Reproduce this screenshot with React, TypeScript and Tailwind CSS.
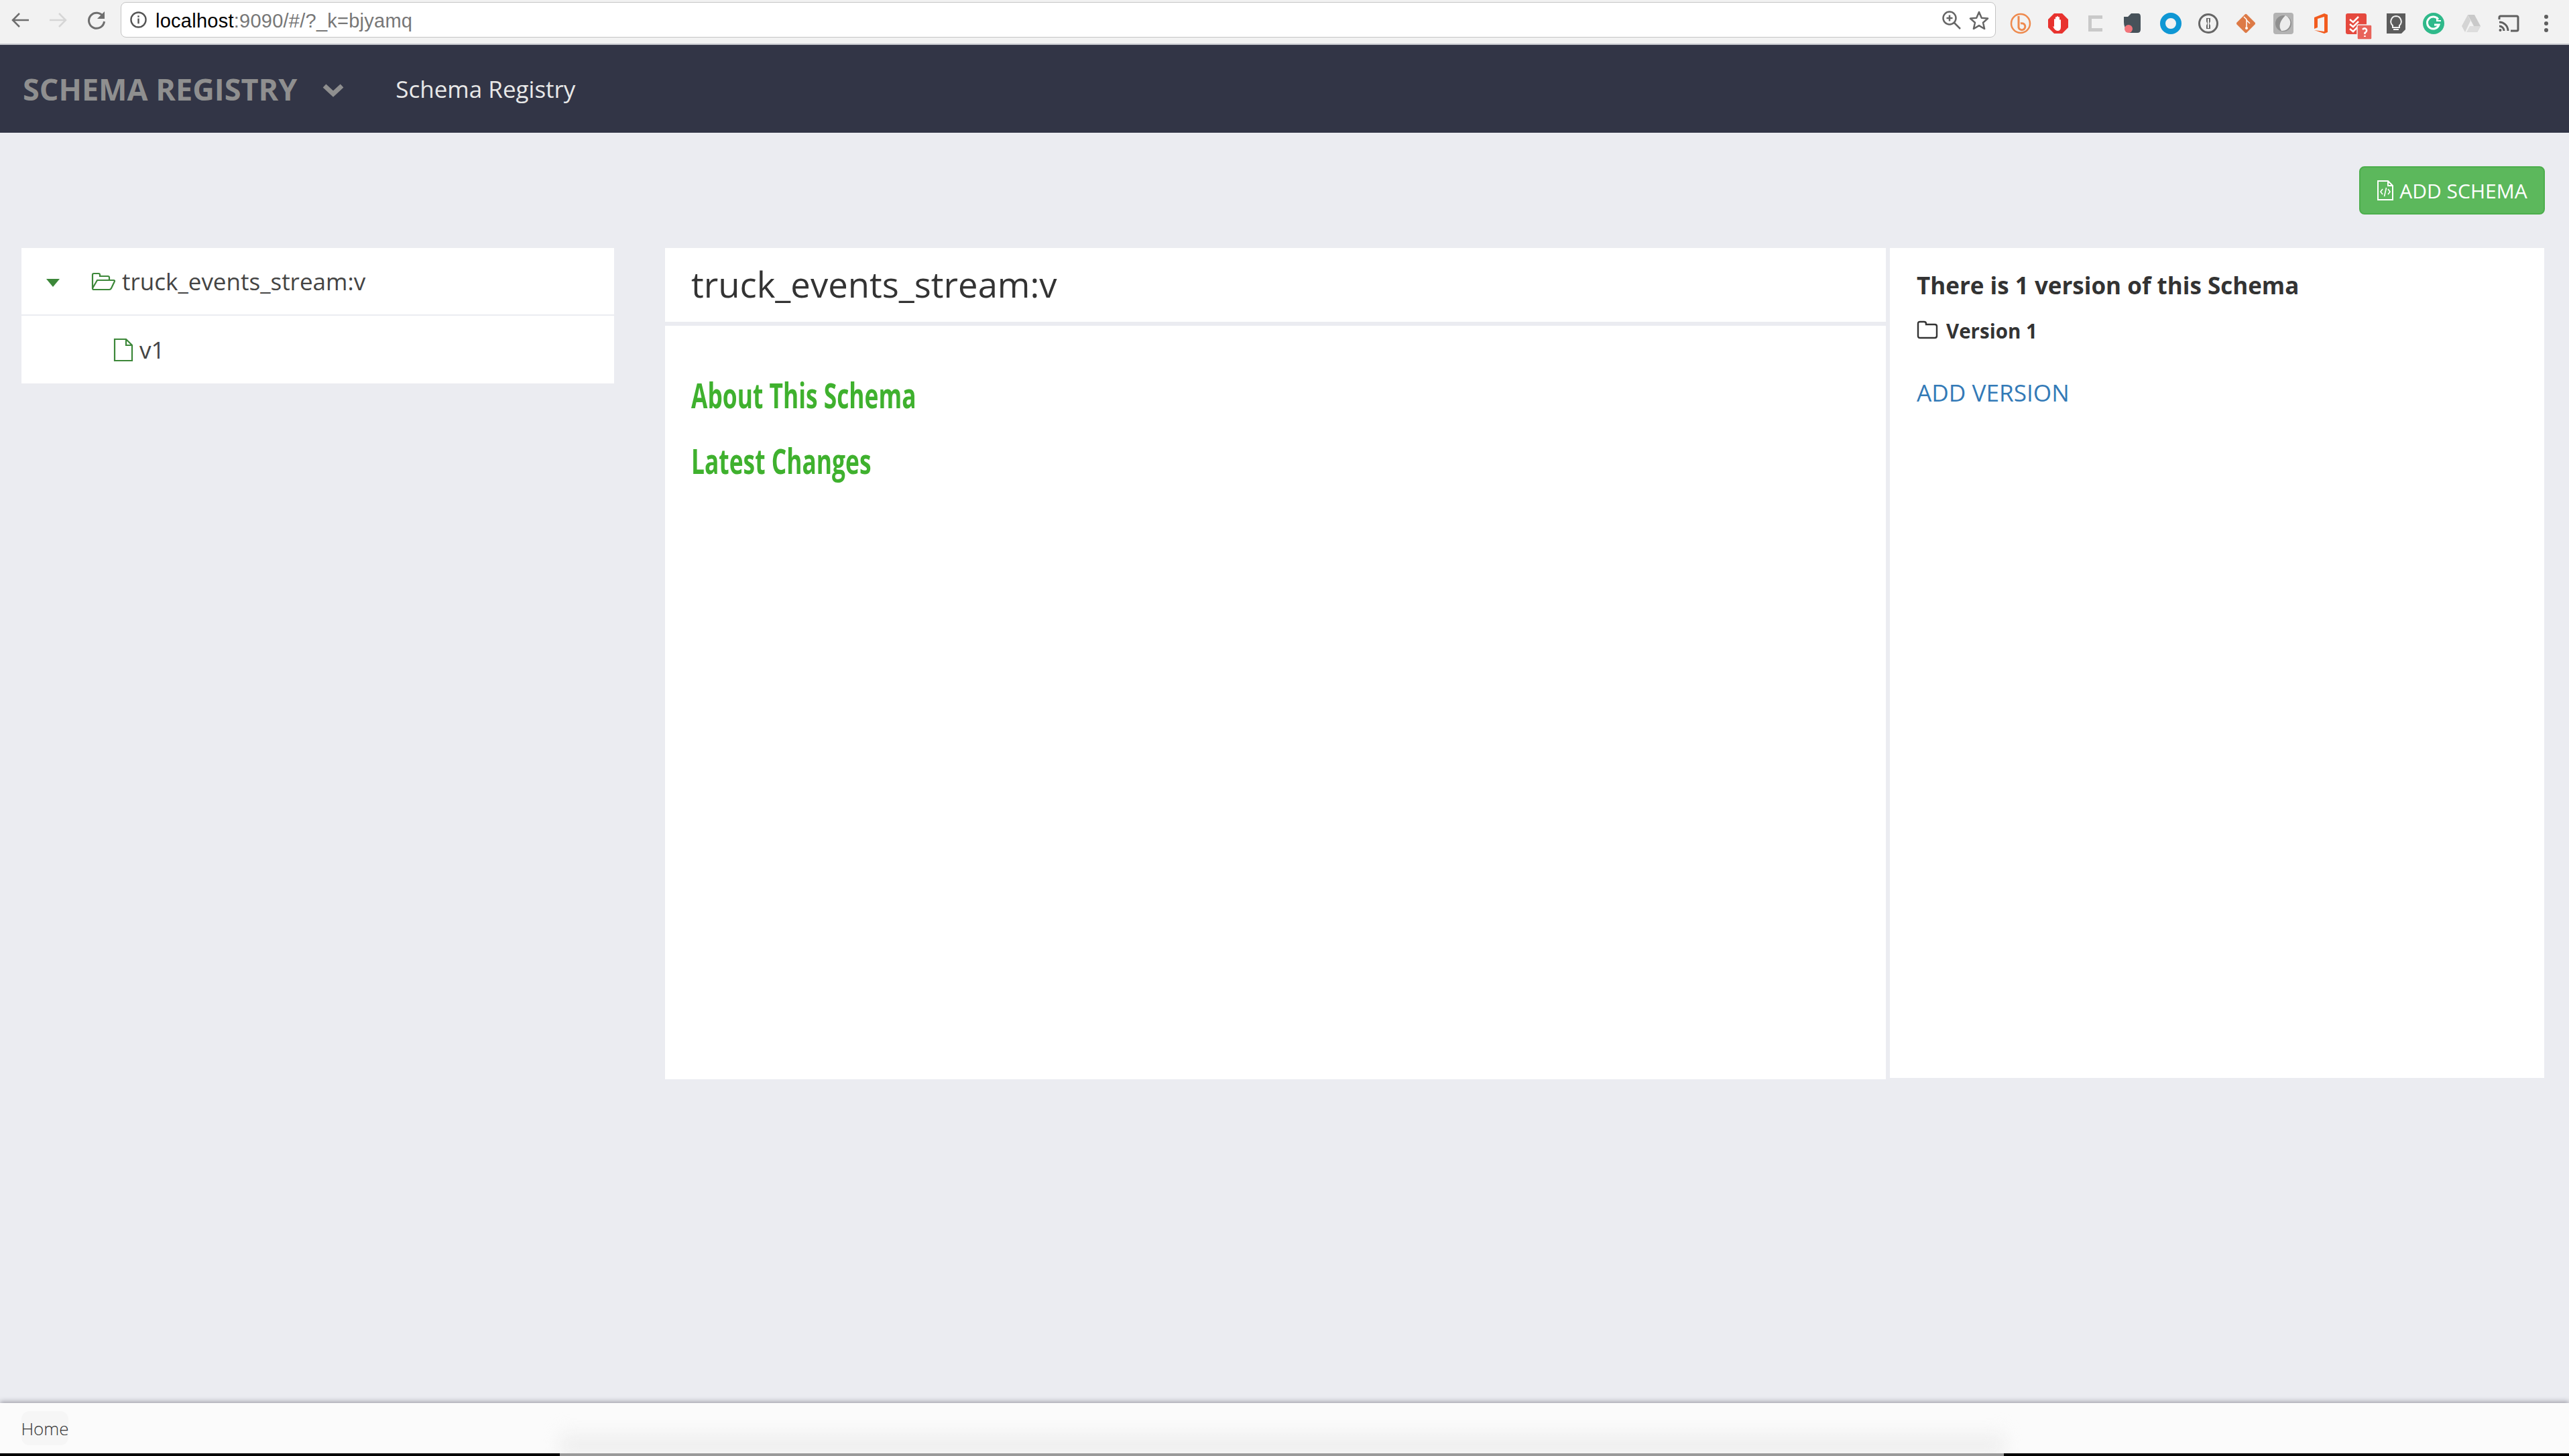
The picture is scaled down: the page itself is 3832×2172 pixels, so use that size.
import React from "react";

const Ext = ({ children }: { children: React.ReactNode }) => (
  <svg viewBox="0 0 32 32" className="w-8 h-8 shrink-0">{children}</svg>
);

function Extensions() {
  return (
    <div className="flex items-center gap-6 ml-[21px]">
      <Ext>
        <circle cx="16" cy="16" r="14" fill="none" stroke="#ee8a4e" strokeWidth="2.5" />
        <path d="M13 5v17a5 5 0 1 0 3-6" fill="none" stroke="#ee8a4e" strokeWidth="3" />
      </Ext>
      <Ext>
        <polygon points="10,1 22,1 31,10 31,22 22,31 10,31 1,22 1,10" fill="#e8332f" />
        <path d="M10 21V10q1-2 2 0v4-7q1-2 2 0v6-7q1-2 2 0v7-6q1-2 2 0v8-4q1-2 2 0v10q0 6-5 6-4 0-7-7z" fill="#fff" />
      </Ext>
      <Ext>
        <path d="M5 4h21v5H10v14h16v5H5z" fill="#c9c9c9" />
      </Ext>
      <Ext>
        <path d="M8 6l5-5h10q4 0 4 5v19q0 5-5 5H12q-3 0-4-4-6-3-6-12V6z" fill="#47525a" />
        <circle cx="9" cy="24" r="6" fill="#f2757b" />
      </Ext>
      <Ext>
        <circle cx="16" cy="16" r="12" fill="none" stroke="#0f97d4" strokeWidth="8" />
      </Ext>
      <Ext>
        <circle cx="16" cy="16" r="13.5" fill="none" stroke="#666" strokeWidth="3" />
        <path d="M13 8h6v5l-1.500 3 1.500 3v5h-6v-5l1.500-3-1.500-3z" fill="#666" />
        <rect x="15" y="9" width="2" height="14" fill="#f2f2f2" />
      </Ext>
      <Ext>
        <rect x="5.500" y="5.500" width="21" height="21" transform="rotate(45 16 16)" rx="2" fill="#dd7a46" />
        <path d="M13 6l4 4v11M17 11l5 5" fill="none" stroke="#fff" strokeWidth="1.500" />
        <circle cx="17" cy="23" r="2" fill="#fff" />
      </Ext>
      <Ext>
        <rect x="1" y="0" width="30" height="32" rx="4" fill="#b3b3b3" />
        <circle cx="16" cy="16" r="12" fill="#8f8f8f" />
        <path d="M19 4a12 12 0 0 1-6 23q-7-10 6-23z" fill="#ececec" />
      </Ext>
      <Ext>
        <path d="M6 7l15-6 5 2v26l-5 2-15-5 15 2V6l-10 3v13l-5 2z" fill="#f25c1f" />
      </Ext>
      <svg viewBox="0 0 40 40" className="w-10 h-10 shrink-0 mt-2 -mx-1">
        <rect x="1" y="1" width="31" height="31" rx="3" fill="#e5493e" />
        <path d="M7 10l5 4 8-8M7 17l5 4 8-8M7 24l5 4 8-8" fill="none" stroke="#fff" strokeWidth="2.500" />
        <rect x="18" y="18" width="22" height="22" rx="2" fill="#e8635a" stroke="#f2f2f2" strokeWidth="1.500" />
        <path d="M26 25q3-3 5.500-.5 2 3-2 5.500v2M29.500 34v2" fill="none" stroke="#fff" strokeWidth="2.500" />
      </svg>
      <Ext>
        <path d="M2 1h28v24l-6 6H2z" fill="#5c5c5c" />
        <path d="M16 5a8 8 0 0 0-5 14v3h10v-3A8 8 0 0 0 16 5zM12 25h8" fill="none" stroke="#f2f2f2" strokeWidth="2" />
      </Ext>
      <Ext>
        <circle cx="16" cy="16" r="16" fill="#2fb98a" />
        <path d="M23 10a9 9 0 1 0 1 8h-7" fill="none" stroke="#fff" strokeWidth="3" />
        <path d="M21 6v6h6" fill="none" stroke="#fff" strokeWidth="2" />
      </Ext>
      <Ext>
        <polygon points="11,3 21,3 30,20 25,29 20,20" fill="#c9c9c9" />
        <polygon points="11,3 15,12 7,29 2,20" fill="#d4d4d4" />
        <polygon points="9,29 25,29 30,20 14,20" fill="#dddddd" />
      </Ext>
      <Ext>
        <path d="M2 10V7q0-2 2-2h24q2 0 2 2v18q0 2-2 2h-9" fill="none" stroke="#5f5f5f" strokeWidth="3" />
        <path d="M2 14a13 13 0 0 1 13 13M2 20a7 7 0 0 1 7 7" fill="none" stroke="#5f5f5f" strokeWidth="3" />
        <circle cx="3.500" cy="26" r="2" fill="#5f5f5f" />
      </Ext>
      <svg viewBox="0 0 8 32" className="w-2 h-8 shrink-0 ml-3">
        <circle cx="4" cy="6" r="3" fill="#5f5f5f" />
        <circle cx="4" cy="16" r="3" fill="#5f5f5f" />
        <circle cx="4" cy="26" r="3" fill="#5f5f5f" />
      </svg>
    </div>
  );
}

function Toolbar() {
  return (
    <div className="h-[67px] shrink-0 bg-[#f2f2f2] border-b-2 border-[#c4c5cb] flex items-start pt-[3px] pl-4 font-['Liberation_Sans',sans-serif]">
      <svg viewBox="0 0 28 24" className="w-7 h-6 mt-[15px] shrink-0">
        <path d="M27 12H3M13 2L3 12l10 10" fill="none" stroke="#6e6e6e" strokeWidth="2.500" />
      </svg>
      <svg viewBox="0 0 28 24" className="w-7 h-6 mt-[15px] ml-[29px] shrink-0">
        <path d="M1 12h24M15 2l10 10-10 10" fill="none" stroke="#d6d6d6" strokeWidth="2.500" />
      </svg>
      <svg viewBox="0 0 28 28" className="w-7 h-7 mt-[13px] ml-[29px] shrink-0">
        <path d="M24 9a11.500 11.500 0 1 0 1.500 7" fill="none" stroke="#6e6e6e" strokeWidth="3" />
        <path d="M26 1v11H15z" fill="#6e6e6e" />
      </svg>
      <div className="ml-[22px] h-[53px] w-[2797px] shrink-0 bg-white border border-[#c4c4c4] rounded-lg flex items-center pl-[13px] pr-[9px]">
        <svg viewBox="0 0 26 26" className="w-[25px] h-[25px] shrink-0">
          <circle cx="13" cy="13" r="11.500" fill="none" stroke="#555" strokeWidth="2.500" />
          <path d="M13 11v8M13 6.500v2.500" stroke="#555" strokeWidth="2.500" />
        </svg>
        <div className="ml-[13px] pt-[3px] text-[29px] tracking-[0.25px] text-[#777] leading-none">
          <span className="text-black">localhost</span>:9090/#/?_k=bjyamq
        </div>
        <div className="ml-auto flex items-center gap-3">
          <svg viewBox="0 0 28 28" className="w-7 h-7">
            <circle cx="11" cy="11" r="9.500" fill="none" stroke="#666" strokeWidth="2.500" />
            <path d="M18 18l9 9M11 6.500v9M6.500 11h9" stroke="#666" strokeWidth="2.500" />
          </svg>
          <svg viewBox="0 0 30 28" className="w-[30px] h-7">
            <path d="M15 2l3.800 8.800 9.200.8-7 6.200 2.100 9.200-8.100-4.900-8.100 4.900 2.100-9.200-7-6.200 9.200-.8z" fill="none" stroke="#666" strokeWidth="2.500" strokeLinejoin="round" />
          </svg>
        </div>
      </div>
      <div className="mt-[8px]">
        <Extensions />
      </div>
    </div>
  );
}

function Navbar() {
  return (
    <div className="h-[131px] shrink-0 bg-[#323546] flex items-center pl-[34px] font-['Open_Sans',sans-serif]">
      <div className="text-[45px] font-bold text-[#8f8f8f] leading-none">SCHEMA REGISTRY</div>
      <svg viewBox="0 0 34 22" className="w-[34px] h-[22px] ml-[37px] mt-[3px]">
        <path d="M4 5l13 12L30 5" fill="none" stroke="#8f8f8f" strokeWidth="7" />
      </svg>
      <div className="ml-[76px] text-[35px] font-normal text-[#e8e8e8] leading-none">Schema Registry</div>
    </div>
  );
}

function Sidebar() {
  return (
    <div className="w-[884px] shrink-0 self-start bg-white divide-y-2 divide-[#ebecf1] text-[35px] text-[#444] leading-none">
      <div className="h-[101px] flex items-center pl-[37px]">
        <svg viewBox="0 0 20 12" className="w-5 h-3 shrink-0 mt-1"><path d="M0 0h20L10 12z" fill="#3c8739" /></svg>
        <svg viewBox="0 0 36 28" className="w-9 h-7 ml-[47px] shrink-0">
          <path d="M2 24V4q0-2 2-2h7q2 0 2 2v2h12q2 0 2 2v4" fill="none" stroke="#3c8739" strokeWidth="2.200" />
          <path d="M9 12h25q1 0 1 1.500L30 24q-1 2-3 2H4q-2 0-2-2z" fill="none" stroke="#3c8739" strokeWidth="2.200" />
        </svg>
        <span className="ml-[10px]">truck_events_stream:v</span>
      </div>
      <div className="h-[101px] flex items-center pl-[137px]">
        <svg viewBox="0 0 30 36" className="w-[30px] h-9 shrink-0">
          <path d="M2 2h17l9 9v23H2zM19 2v9h9" fill="none" stroke="#3c8739" strokeWidth="2.200" />
        </svg>
        <span className="ml-[9px]">v1</span>
      </div>
    </div>
  );
}

function Center() {
  return (
    <div className="w-[1821px] h-[1240px] shrink-0 flex flex-col gap-[6px] ml-[76px]">
      <div className="h-[110px] shrink-0 bg-white pl-[39px] flex items-center text-[52.6px] text-[#333] leading-none pb-[2px]">
        truck_events_stream:v
      </div>
      <div className="flex-1 bg-white pl-[39px] pt-[71px] text-[#3fb12e] flex flex-col gap-[34px] items-start">
        <div className="text-[52px] h-[64px] leading-[64px] font-bold origin-left scale-x-[0.68] whitespace-nowrap">About This Schema</div>
        <div className="text-[52px] h-[64px] leading-[64px] font-bold origin-left scale-x-[0.68] whitespace-nowrap">Latest Changes</div>
      </div>
    </div>
  );
}

function RightPanel() {
  return (
    <div className="w-[976px] h-[1238px] shrink-0 ml-[6px] bg-white pl-[40px] pt-[33px] text-[#333]">
      <div className="text-[35px] font-bold leading-[46px]">There is 1 version of this Schema</div>
      <div className="flex items-center mt-[26px] text-[29.5px] font-bold leading-[38px]">
        <svg viewBox="0 0 32 28" className="w-8 h-7 shrink-0 -mt-[5px]">
          <path d="M2 5q0-3 3-3h6q3 0 3 3v1h13q3 0 3 3v14q0 3-3 3H5q-3 0-3-3z" fill="none" stroke="#333" strokeWidth="2.400" />
        </svg>
        <span className="ml-3">Version 1</span>
      </div>
      <div className="mt-[49px] text-[35.2px] leading-[46px] text-[#337ab7]">ADD VERSION</div>
    </div>
  );
}

export default function App() {
  return (
    <div className="w-full h-[2172px] overflow-hidden flex flex-col bg-[#ebecf1] font-['Open_Sans',sans-serif]">
      <Toolbar />
      <Navbar />
      <div className="flex-1 flex flex-col pl-8 pr-9">
        <div className="pt-[50px] flex justify-end">
          <button className="w-[277px] h-[72px] bg-[#5cb85c] border-2 border-[#4cae4c] rounded-lg flex items-center justify-center gap-2 text-white text-[30px] font-normal">
            <svg viewBox="0 0 26 32" className="w-[26px] h-8 shrink-0">
              <path d="M2 2h15l7 7v21H2zM17 2v7h7" fill="none" stroke="#fff" strokeWidth="2" />
              <path d="M9 14l-3 4 3 4M17 14l3 4-3 4M14.500 12l-3 13" fill="none" stroke="#fff" strokeWidth="1.600" />
            </svg>
            ADD SCHEMA
          </button>
        </div>
        <div className="mt-[50px] flex">
          <Sidebar />
          <Center />
          <RightPanel />
        </div>
      </div>
      <div className="relative h-[75px] shrink-0 bg-[#fbfbfb] shadow-[0_-2px_7px_rgba(60,60,75,0.45)] flex items-start pl-8 pt-3">
        <div className="absolute left-[835px] right-[843px] bottom-0 h-[40px] bg-gradient-to-t from-[#e8e8e8] to-transparent blur-md" />
        <div className="relative h-[51px] w-[70px] bg-[#f6f6f6] rounded-xl flex items-center justify-center text-[26px] font-light text-[#333] leading-none">
          Home
        </div>
      </div>
      <div className="relative h-1 shrink-0 bg-black">
        <div className="absolute left-[835px] right-[843px] top-0 bottom-0 bg-[#9a9a9a]" />
      </div>
    </div>
  );
}
